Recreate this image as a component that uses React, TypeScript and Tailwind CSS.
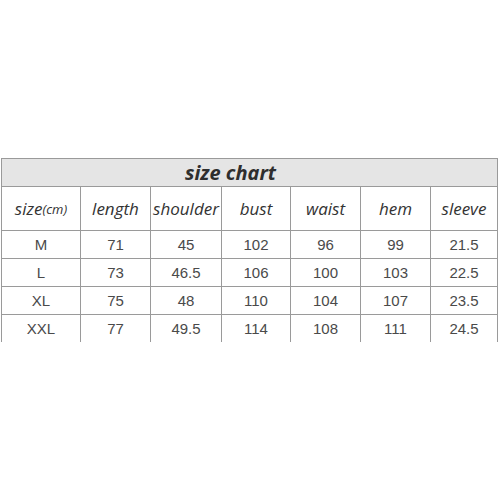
const headers = ['length', 'shoulder', 'bust', 'waist', 'hem', 'sleeve']

const rows = [
  ['M', '71', '45', '102', '96', '99', '21.5'],
  ['L', '73', '46.5', '106', '100', '103', '22.5'],
  ['XL', '75', '48', '110', '104', '107', '23.5'],
  ['XXL', '77', '49.5', '114', '108', '111', '24.5'],
]

const widths = ['w-[79px]', 'w-[70px]', 'w-[71px]', 'w-[69px]', 'w-[70px]', 'w-[70px]', 'w-[67px]']

export default function App() {
  return (
    <div className="w-[500px] h-[500px] bg-white pt-[158px] pl-[1px]">
      <div className="w-[497px] border-r border-[#9a9a9a]">
        <div className="h-[29px] bg-[#e5e5e5] border-t border-b border-l border-[#9a9a9a] flex items-center justify-center pr-[38px]">
          <span className="font-['Open_Sans',sans-serif] italic font-bold text-[20px] text-[#2e2e2e] leading-none">
            size chart
          </span>
        </div>

        <div className="flex">
          <div className={`${widths[0]} h-[44px] border-l border-b border-[#9a9a9a] flex items-center justify-center font-['Open_Sans',sans-serif] italic text-[#333] text-[17px]`}>
            size<span className="text-[13px] mt-[2px]">(cm)</span>
          </div>
          {headers.map((h, i) => (
            <div
              key={h}
              className={`${widths[i + 1]} h-[44px] border-l border-b border-[#9a9a9a] flex items-center justify-center font-['Open_Sans',sans-serif] italic text-[#333] text-[17px] whitespace-nowrap`}
            >
              {h}
            </div>
          ))}
        </div>

        {rows.map((r, ri) => (
          <div key={r[0]} className="flex">
            {r.map((c, ci) => (
              <div
                key={ci}
                className={`${widths[ci]} ${ri === rows.length - 1 ? 'h-[27px]' : 'h-[28px] border-b'} border-l border-[#9a9a9a] flex items-center justify-center pt-[2px] font-['Liberation_Sans',Arial,sans-serif] text-[15px] text-[#4a4a4a]`}
              >
                {c}
              </div>
            ))}
          </div>
        ))}
      </div>
    </div>
  )
}
